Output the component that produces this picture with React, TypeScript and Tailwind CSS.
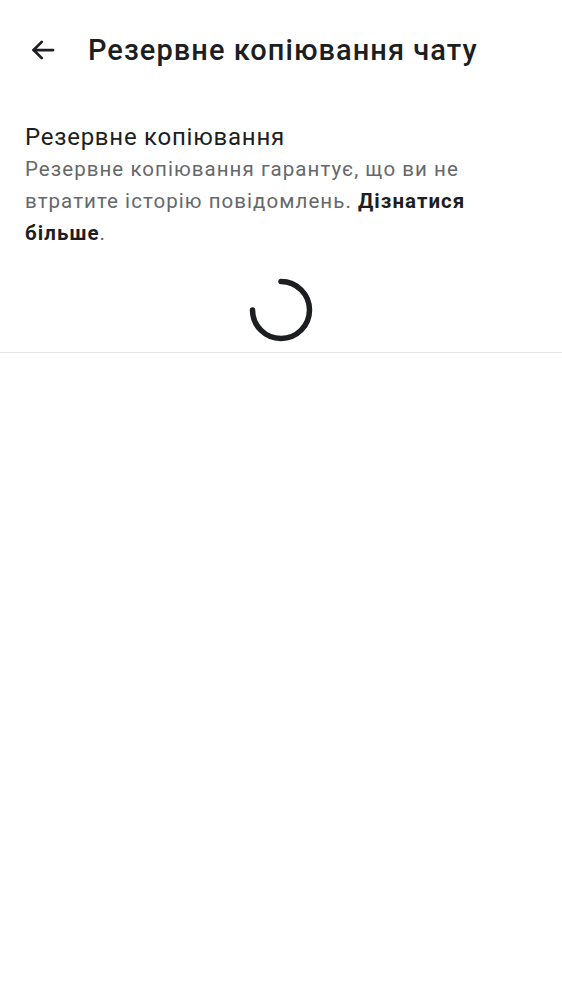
import React from "react";

export default function App() {
  return (
    <div className="w-[562px] h-[1000px] bg-white" style={{ fontFamily: "Roboto, 'Noto Sans', sans-serif" }}>
      <div className="flex items-center pt-[33px] pl-[28px]">
        <svg width="30" height="30" viewBox="0 0 24 24" fill="none" stroke="#1c1e21" strokeWidth="2.2" strokeLinecap="round" strokeLinejoin="round">
          <path d="M20 12H4.5" />
          <path d="M11 5.5L4.5 12L11 18.5" />
        </svg>
        <div className="ml-[30px] text-[29px] leading-[34px] text-[#1c1e21] font-medium tracking-[1.05px] whitespace-nowrap">Резервне копіювання чату</div>
      </div>
      <div className="pl-[25px] pr-[20px] pt-[55px]">
        <div className="text-[24px] leading-[30px] text-[#1c1e21] tracking-[0.75px]">Резервне копіювання</div>
        <div className="text-[20.5px] leading-[32px] text-[#65686c] mt-[1px] tracking-[1.05px] w-[475px]">
          Резервне копіювання гарантує, що ви не втратите історію повідомлень.{" "}
          <span className="font-bold text-[#1c1e21]">Дізнатися більше</span>.
        </div>
      </div>
      <div className="flex justify-center pt-[28px] pb-[9px]">
        <svg width="66" height="66" viewBox="0 0 66 66">
          <path d="M33 4.5 A28.5 28.5 0 1 1 4.5 33" fill="none" stroke="#1c1e21" strokeWidth="5.5" strokeLinecap="round" />
        </svg>
      </div>
      <div className="h-px bg-[#e5e7ea]" />
    </div>
  );
}
